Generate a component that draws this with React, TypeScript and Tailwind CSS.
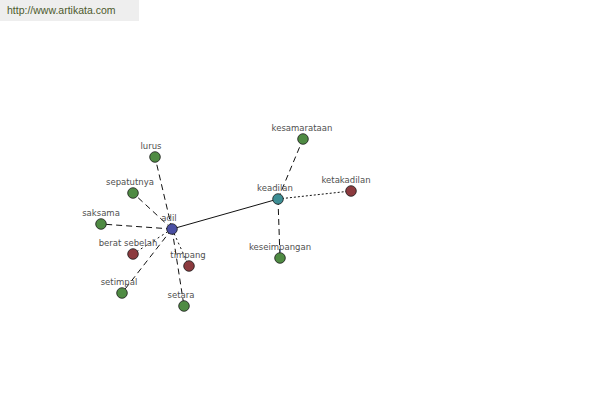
const GREEN = "#4f8b43";
const RED = "#8c3a3e";
const BLUE = "#4a4fa3";
const TEAL = "#3d8e94";

type Node = { id: string; x: number; y: number; fill: string; lx?: number };

const nodes: Node[] = [
  { id: "adil", x: 172, y: 229, fill: BLUE, lx: 169 },
  { id: "keadilan", x: 278, y: 199, fill: TEAL, lx: 275 },
  { id: "lurus", x: 155, y: 157, fill: GREEN, lx: 151 },
  { id: "sepatutnya", x: 133, y: 193, fill: GREEN, lx: 130 },
  { id: "saksama", x: 101, y: 224, fill: GREEN, lx: 101 },
  { id: "berat sebelah", x: 133, y: 254, fill: RED, lx: 128 },
  { id: "timpang", x: 189, y: 266, fill: RED, lx: 188 },
  { id: "setimpal", x: 122, y: 293, fill: GREEN, lx: 119 },
  { id: "setara", x: 184, y: 306, fill: GREEN, lx: 181 },
  { id: "kesamarataan", x: 303, y: 139, fill: GREEN, lx: 302 },
  { id: "ketakadilan", x: 351, y: 191, fill: RED, lx: 346 },
  { id: "keseimpangan", x: 280, y: 258, fill: GREEN, lx: 280 },
];

const pos = Object.fromEntries(nodes.map((n) => [n.id, n]));

const edges: { a: string; b: string; dash?: string }[] = [
  { a: "adil", b: "keadilan" },
  { a: "adil", b: "lurus", dash: "6 4" },
  { a: "adil", b: "sepatutnya", dash: "6 4" },
  { a: "adil", b: "saksama", dash: "6 4" },
  { a: "adil", b: "berat sebelah", dash: "2 3" },
  { a: "adil", b: "timpang", dash: "2 3" },
  { a: "adil", b: "setimpal", dash: "6 4" },
  { a: "adil", b: "setara", dash: "6 4" },
  { a: "keadilan", b: "kesamarataan", dash: "6 4" },
  { a: "keadilan", b: "ketakadilan", dash: "2 2" },
  { a: "keadilan", b: "keseimpangan", dash: "6 4" },
];

export default function App() {
  return (
    <div className="relative h-[400px] w-[600px] overflow-hidden bg-white">
      <div className="absolute left-0 top-0 flex h-[21px] w-[139px] items-center bg-[#eeeeee] pl-[7px] font-['Liberation_Sans',Arial,sans-serif] text-[10.5px] text-[#4d5a2c]">
        http://www.artikata.com
      </div>

      <svg className="absolute left-0 top-0" width={600} height={400} viewBox="0 0 600 400">
        {edges.map((e) => {
          const a = pos[e.a];
          const b = pos[e.b];
          return (
            <line
              key={e.a + e.b}
              x1={a.x}
              y1={a.y}
              x2={b.x}
              y2={b.y}
              stroke="#111"
              strokeWidth={1}
              strokeDasharray={e.dash}
            />
          );
        })}
        {nodes.map((n) => (
          <g key={n.id}>
            <text
              x={n.lx ?? n.x}
              y={n.y - 8}
              textAnchor="middle"
              fontFamily="'DejaVu Sans', Verdana, sans-serif"
              fontSize={8.5}
              fill="#505050"
            >
              {n.id}
            </text>
            <circle cx={n.x} cy={n.y} r={5.3} fill={n.fill} stroke="#1a1a1a" strokeWidth={0.8} />
          </g>
        ))}
      </svg>
    </div>
  );
}
